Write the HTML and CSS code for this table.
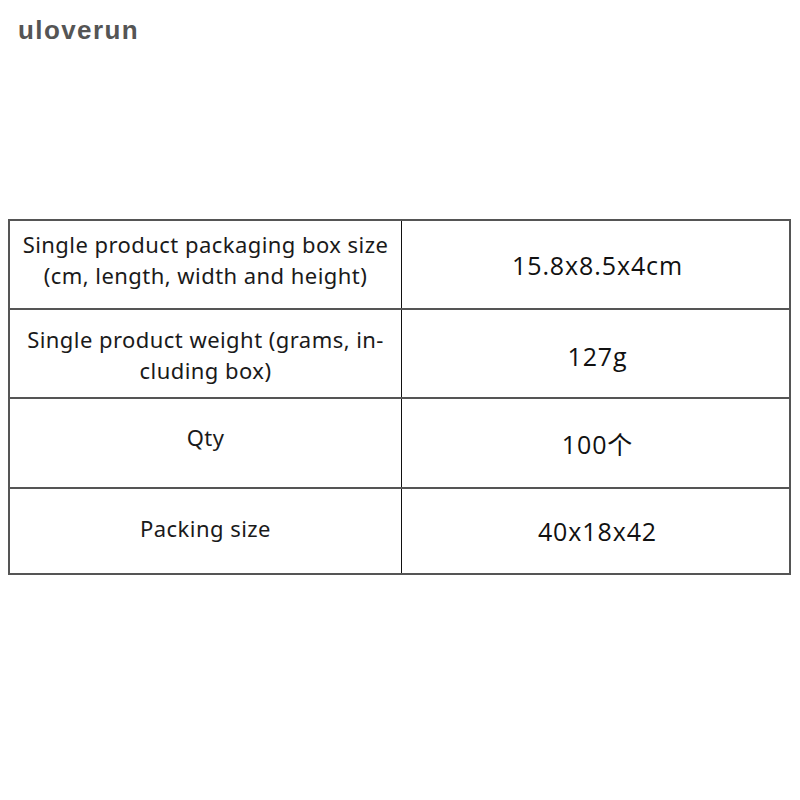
FILE: index.html
```html
<!DOCTYPE html>
<html>
<head>
<meta charset="utf-8">
<link rel="stylesheet" href="styles.css">
</head>
<body>
<div class="brand">uloverun</div>
<table class="spec">
  <tr class="r1">
    <td class="label">Single product packaging box size<br>(cm, length, width and height)</td>
    <td class="value">15.8x8.5x4cm</td>
  </tr>
  <tr class="r2">
    <td class="label">Single product weight (grams, in-<br>cluding box)</td>
    <td class="value">127g</td>
  </tr>
  <tr class="r3">
    <td class="label">Qty</td>
    <td class="value">100个</td>
  </tr>
  <tr class="r4">
    <td class="label">Packing size</td>
    <td class="value">40x18x42</td>
  </tr>
</table>
</body>
</html>
```
FILE: styles.css
```css
html, body {
  margin: 0;
  padding: 0;
  background: #fff;
}
.brand {
  font-family: "Liberation Sans", Arial, sans-serif;
  font-size: 26px;
  font-weight: 700;
  color: #555;
  letter-spacing: 1.4px;
  padding: 15px 0 0 18px;
  height: 219px;
  box-sizing: border-box;
  line-height: 30px;
}
.spec {
  margin-left: 8px;
  border-collapse: collapse;
  width: 783px;
  table-layout: fixed;
}
.spec td {
  padding: 0;
  text-align: center;
  color: #1a1a1a;
}
.spec tr {
  border-top: 2px solid #555;
  border-bottom: 2px solid #555;
}
.spec td.label {
  width: 391px;
  vertical-align: top;
  border-left: 2px solid #555;
  border-right: 1px solid #111;
  font-family: "Noto Sans", "Noto Sans CJK SC", sans-serif;
  font-size: 22px;
  letter-spacing: 0.45px;
  line-height: 31px;
}
.spec td.value {
  vertical-align: middle;
  border-right: 2px solid #555;
  font-family: "Open Sans", "Noto Sans CJK SC", sans-serif;
  font-size: 25px;
  letter-spacing: 0.9px;
  padding-left: 4px;
  color: #111;
}
.r1 { height: 89px; }
.r2 { height: 89px; }
.r3 { height: 90px; }
.r4 { height: 86px; }
.r1 td.label { padding-top: 8px; }
.r2 td.label { padding-top: 14px; }
.r3 td.label { padding-top: 23px; }
.r4 td.label { padding-top: 24px; }
.r2 td.value { padding-top: 4px; }
```
